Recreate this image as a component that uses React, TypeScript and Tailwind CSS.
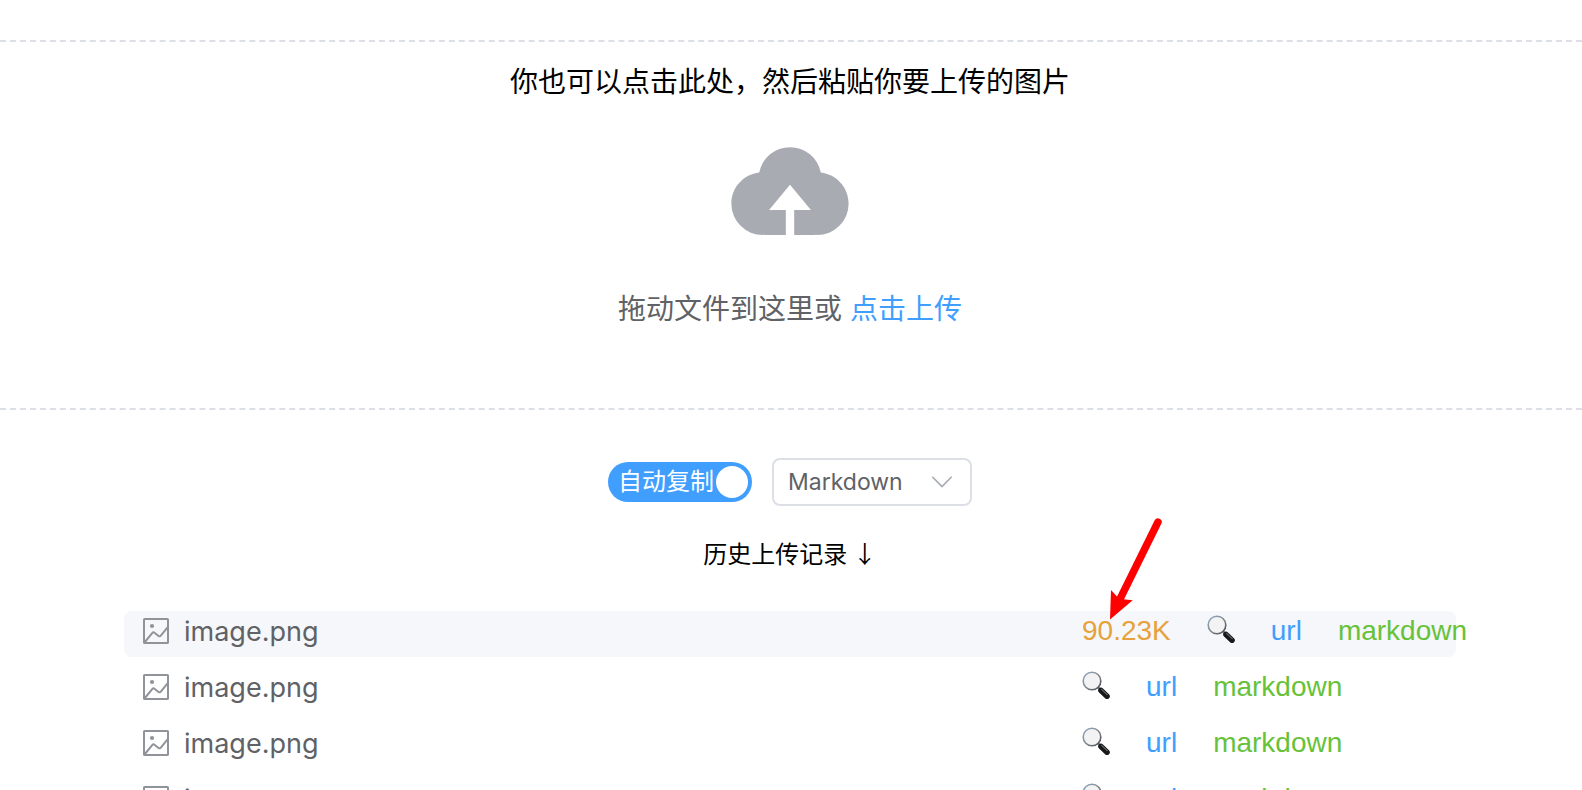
import { useState } from 'react';
import clsx from 'clsx';

type UploadRecord = {
	id: number;
	name: string;
	size?: string;
};

const RECORDS: UploadRecord[] = [
	{ id: 1, name: 'image.png', size: '90.23K' },
	{ id: 2, name: 'image.png' },
	{ id: 3, name: 'image.png' },
	{ id: 4, name: 'image.png' },
];

function UploadIcon() {
	return (
		<svg viewBox="0 0 1024 1024" className="size-[134px] text-[#a8abb2]" fill="currentColor" aria-hidden="true">
			<path d="M544 864V672h128L512 480 352 672h128v192H320v-1.6c-5.376.32-10.496 1.6-16 1.6A240 240 0 0 1 64 624c0-123.136 93.12-223.488 212.608-237.248A239.808 239.808 0 0 1 512 192a239.872 239.872 0 0 1 235.456 194.752c119.488 13.76 212.48 114.112 212.48 237.248a240 240 0 0 1-240 240c-5.376 0-10.56-1.28-16-1.6v1.6z" />
		</svg>
	);
}

function PictureIcon() {
	return (
		<svg viewBox="0 0 26 26" className="size-[26px] text-[#909399]" fill="none" stroke="currentColor" strokeWidth="2" aria-hidden="true">
			<rect x="1" y="1" width="24" height="24" rx="0.6" />
			<circle cx="9" cy="8" r="2.1" fill="currentColor" stroke="none" />
			<path d="M1.5 24.5 9.4 14.8Q10.4 13.7 11.5 14.8L15.5 18Q16.8 18.8 17.8 17.6L24.8 9.2" />
		</svg>
	);
}

function MagnifierIcon() {
	return (
		<svg viewBox="0 0 28 28" className="size-7" aria-hidden="true">
			<defs>
				<linearGradient id="rim" x1="0" y1="0" x2="1" y2="1">
					<stop offset="0" stopColor="#8fa9c4" />
					<stop offset="0.5" stopColor="#84898f" />
					<stop offset="1" stopColor="#44484d" />
				</linearGradient>
			</defs>
			<path d="m15.8 16.2 3 3" stroke="#77797c" strokeWidth="2.6" />
			<path d="m19 19.4 6 5.8" stroke="#17191b" strokeWidth="5.6" strokeLinecap="round" />
			<path d="m19.6 18.4 5.6 5.2" stroke="#64686c" strokeWidth="1.2" strokeLinecap="round" />
			<circle cx="10" cy="10" r="8.8" fill="#f3f3f4" stroke="url(#rim)" strokeWidth="1.6" />
		</svg>
	);
}

function Pointer() {
	return (
		<svg viewBox="0 0 56 106" className="pointer-events-none absolute -top-[95px] left-[26px] h-[106px] w-14" aria-hidden="true">
			<path d="M50 6 12.5 82" stroke="#fe0000" strokeWidth="7.4" strokeLinecap="round" />
			<path d="M2 103.5 3 74l6.7 7.3 5.6 2 9.4 1z" fill="#fe0000" />
		</svg>
	);
}

function UploadArea() {
	return (
		<section className="border-y-2 border-dashed border-[#dcdfe6] pt-[21px] pb-[78px]">
			<div className="flex flex-col items-center pr-0.5">
				<p className="text-[28px] leading-10 text-black">你也可以点击此处，然后粘贴你要上传的图片</p>
				<div className="mt-[19px] mb-[34px]">
					<UploadIcon />
				</div>
				<div className="flex gap-2 text-[28px] leading-10 text-[#606266]">
					<span>拖动文件到这里或</span>
					<button type="button" className="cursor-pointer text-[#409eff]">
						点击上传
					</button>
				</div>
			</div>
		</section>
	);
}

function CopyOptions() {
	const [autoCopy, setAutoCopy] = useState(true);
	const [format, setFormat] = useState('Markdown');

	return (
		<div className="flex items-center justify-center gap-5">
			<label
				className={clsx(
					'flex h-10 w-36 cursor-pointer items-center justify-between rounded-full pr-1 pl-2.5 text-2xl text-white',
					autoCopy ? 'bg-[#409eff]' : 'flex-row-reverse bg-[#dcdfe6]',
				)}
			>
				<input
					type="checkbox"
					role="switch"
					className="sr-only"
					checked={autoCopy}
					onChange={(e) => setAutoCopy(e.target.checked)}
				/>
				<span className="whitespace-nowrap">自动复制</span>
				<span className="size-8 shrink-0 rounded-full bg-white" />
			</label>
			<div className="relative">
				<select
					aria-label="链接格式"
					className="h-12 w-[200px] appearance-none rounded-lg border-2 border-[#dcdfe6] bg-white pl-3.5 font-[Inter] text-[23px] text-[#606266]"
					value={format}
					onChange={(e) => setFormat(e.target.value)}
				>
					<option>Markdown</option>
					<option>URL</option>
				</select>
				<svg
					viewBox="0 0 20 12"
					className="pointer-events-none absolute top-[18px] right-5 h-3 w-5"
					fill="none"
					stroke="#a8abb2"
					strokeWidth="1.6"
					strokeLinecap="round"
					strokeLinejoin="round"
					aria-hidden="true"
				>
					<path d="m.8 1.2 9.2 9.4 9.2-9.4" />
				</svg>
			</div>
		</div>
	);
}

function RecordItem({ record, isActive }: { record: UploadRecord; isActive: boolean }) {
	return (
		<li className={clsx('flex h-[46px] rounded-lg pl-[19px]', isActive && 'bg-[#f5f7fa]')}>
			<div className="flex flex-1 items-start gap-[15px] text-[27px] leading-[42px] text-[#606266]">
				<span className="mt-[7px]">
					<PictureIcon />
				</span>
				<span className="font-[Inter]">{record.name}</span>
			</div>
			<div className="relative flex w-[374px] items-start gap-9 text-[28px] leading-10 whitespace-nowrap">
				{record.size && <span className="text-[#e6a23c]">{record.size}</span>}
				<button type="button" aria-label="预览" className="mt-1 shrink-0 cursor-pointer">
					<MagnifierIcon />
				</button>
				<a href="#url" className="text-[#409eff]">
					url
				</a>
				<a href="#markdown" className="text-[#67c23a]">
					markdown
				</a>
				{isActive && <Pointer />}
			</div>
		</li>
	);
}

export default function App() {
	return (
		<main className="h-screen overflow-hidden bg-white pt-10 font-['Liberation_Sans','Noto_Sans_CJK_SC',sans-serif]">
			<UploadArea />
			<div className="pt-12 pr-0.5">
				<CopyOptions />
				<h2 className="mt-[31px] text-center font-['Noto_Sans_CJK_SC',sans-serif] text-2xl text-black">历史上传记录 ↓</h2>
				<ul className="mx-[124px] mt-[42px] flex flex-col gap-2.5">
					{RECORDS.map((record, index) => (
						<RecordItem key={record.id} record={record} isActive={index === 0} />
					))}
				</ul>
			</div>
		</main>
	);
}
